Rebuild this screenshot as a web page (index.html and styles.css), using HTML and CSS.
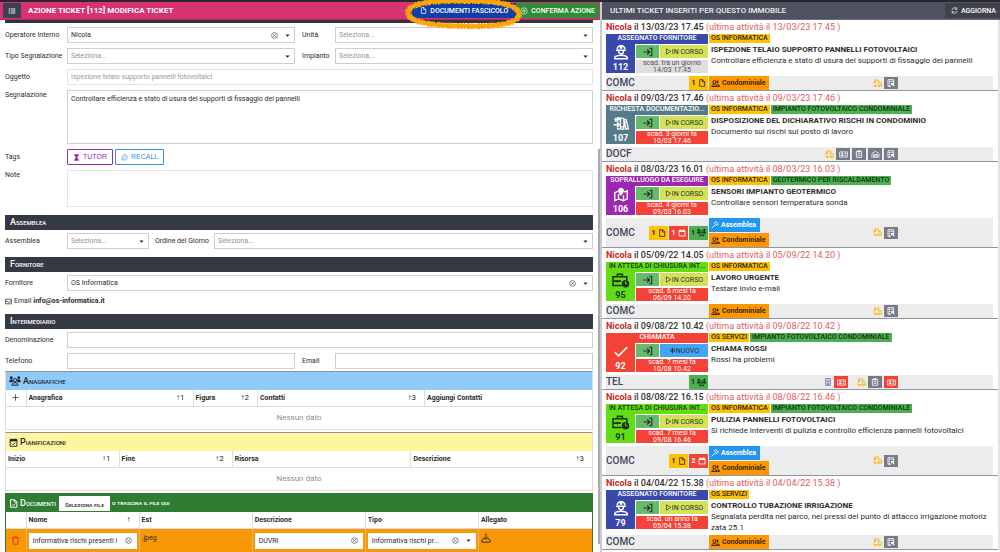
FILE: index.html
```html
<!DOCTYPE html>
<html lang="it">
<head>
<meta charset="utf-8">
<title>Azione ticket</title>
<link rel="stylesheet" href="styles.css">
</head>
<body>
<svg class="sprite" aria-hidden="true">
  <symbol id="list" viewBox="0 0 24 24"><path d="M2 4h4v4H2zM2 10h4v4H2zM2 16h4v4H2zM8 4h14v4H8zM8 10h14v4H8zM8 16h14v4H8z" fill="currentColor"/></symbol>
  <symbol id="file" viewBox="0 0 24 24"><path d="M5 2h9l6 6v14H5zM13 2v7h7" fill="none" stroke="currentColor" stroke-width="2.4"/></symbol>
  <symbol id="confirm" viewBox="0 0 24 24"><circle cx="12" cy="12" r="9.5" fill="none" stroke="currentColor" stroke-width="2"/><path d="M6 12h9M11 7l5 5-5 5" fill="none" stroke="currentColor" stroke-width="2.4"/></symbol>
  <symbol id="sync" viewBox="0 0 24 24"><path d="M3 11a9 9 0 0 1 16-5M21 13a9 9 0 0 1-16 5M20 1v7h-7M4 23v-7h7" fill="none" stroke="currentColor" stroke-width="2.4"/></symbol>
  <symbol id="clear" viewBox="0 0 24 24"><circle cx="12" cy="12" r="10" fill="none" stroke="currentColor" stroke-width="3"/><path d="M7.500 7.500l9 9M16.500 7.500l-9 9" stroke="currentColor" stroke-width="3"/></symbol>
  <symbol id="caret" viewBox="0 0 24 24"><path d="M2 7h20L12 18z" fill="currentColor"/></symbol>
  <symbol id="hourglass" viewBox="0 0 24 24"><path d="M4 1h16v4H4zM4 19h16v4H4zM6 5h12c0 4-3 5-4 7 1 2 4 3 4 7H6c0-4 3-5 4-7-1-2-4-3-4-7z" fill="currentColor"/></symbol>
  <symbol id="recall" viewBox="0 0 24 24"><path d="M3 21l1.500-5A9 9 0 1 1 9 20z" fill="none" stroke="currentColor" stroke-width="2.400"/><path d="M8 12l3 3 6-6" fill="none" stroke="currentColor" stroke-width="2.400"/></symbol>
  <symbol id="mail" viewBox="0 0 24 24"><path d="M2 4h20v16H2zM2 8l10 7 10-7" fill="none" stroke="currentColor" stroke-width="2.500"/></symbol>
  <symbol id="crowd" viewBox="0 0 28 24"><g fill="currentColor"><circle cx="5" cy="4" r="3.500"/><circle cx="23" cy="4" r="3.500"/><path d="M0 14c0-8 10-8 10-1l-3 2H0zM28 14c0-8-10-8-10-1l3 2h7z"/></g><circle cx="14" cy="9.500" r="3.800" fill="none" stroke="currentColor" stroke-width="2.200"/><path d="M6.500 22c0-8 15-8 15 0z" fill="none" stroke="currentColor" stroke-width="2.400"/></symbol>
  <symbol id="users" viewBox="0 0 24 24"><g fill="none" stroke="currentColor" stroke-width="2.600"><circle cx="9" cy="8" r="4"/><path d="M2 20v-2c1-4 13-4 14 0v2z"/></g><path d="M15 3c7 0 7 9 0 9zM17 14c4 0 6 2 6 4v3h-5z" fill="currentColor"/></symbol>
  <symbol id="calcheck" viewBox="0 0 24 24"><path d="M3 4h18v18H3zM8 1v4M16 1v4" fill="none" stroke="currentColor" stroke-width="2.500"/><path d="M3 4h18v5H3z" fill="currentColor"/><path d="M8 15l3 3 6-6" fill="none" stroke="currentColor" stroke-width="2.500"/></symbol>
  <symbol id="doccheck" viewBox="0 0 24 24"><path d="M4 2h11l6 6v14H4zM14 2v6h6M8 15l3 3 6-6" fill="none" stroke="currentColor" stroke-width="2.600"/></symbol>
  <symbol id="calendar" viewBox="0 0 24 24"><path d="M3 5h18v16H3zM7 1v4M17 1v4" fill="none" stroke="currentColor" stroke-width="2.600"/><path d="M3 4h18v5H3z" fill="currentColor"/></symbol>
  <symbol id="trash" viewBox="0 0 24 24"><path d="M2 5h20M8 5V2h8v3M5 5l1 17h12l1-17" fill="none" stroke="currentColor" stroke-width="2.600"/></symbol>
  <symbol id="download" viewBox="0 0 24 24"><path d="M12 1v14M7 10l5 5 5-5M8 13l-6 4v5h20v-5l-6-4" fill="none" stroke="currentColor" stroke-width="2.200"/></symbol>
  <symbol id="worker" viewBox="0 0 24 24"><path d="M6 7c0-8 12-8 12 0" fill="none" stroke="currentColor" stroke-width="2.400"/><path d="M10 1h4v5h-4zM4 7h16v2.500H4z" fill="currentColor"/><path d="M8 9c0 7 8 7 8 0M2 22v-2c2-5 18-5 20 0v2z" fill="none" stroke="currentColor" stroke-width="2.400"/></symbol>
  <symbol id="archive" viewBox="0 0 28 24"><path d="M8 9V2h5v20H8v-3M8 5h5M14 3h5v19h-5M19 6l4-1 4 16-4 1zM14 18h5M20 10l4-1" fill="none" stroke="currentColor" stroke-width="2.200"/><path d="M1 14h9M7 10l4 4-4 4M5 2v7M2 5h6" fill="none" stroke="currentColor" stroke-width="2.600"/></symbol>
  <symbol id="map" viewBox="0 0 24 24"><path d="M7 7L2 9v13l6-3 8 3 6-3V6l-5 2M8 11v8M16 13v9" fill="none" stroke="currentColor" stroke-width="2.200"/><path d="M12 14C4 6 8 1 12 1s8 5 0 13z" fill="currentColor"/></symbol>
  <symbol id="briefcase" viewBox="0 0 28 24"><path d="M16 20H2V6h22v5M9 6V2h8v4M2 13h13M9 11v4" fill="none" stroke="currentColor" stroke-width="2.500"/><circle cx="22" cy="17" r="6" fill="currentColor"/><path d="M22 13v4h3" fill="none" stroke="#62dd13" stroke-width="1.500"/></symbol>
  <symbol id="check" viewBox="0 0 24 24"><path d="M2 13l6 6L22 5" fill="none" stroke="currentColor" stroke-width="2.400"/></symbol>
  <symbol id="enter" viewBox="0 0 24 24"><path d="M1 12h14M10 6l6 6-6 6M15 3h6v18h-6" fill="none" stroke="currentColor" stroke-width="2.600"/></symbol>
  <symbol id="play" viewBox="0 0 24 24"><path d="M5 3l15 9-15 9z" fill="none" stroke="currentColor" stroke-width="2.400"/></symbol>
  <symbol id="star" viewBox="0 0 24 24"><path d="M12 2v20M3 7l18 10M21 7L3 17" stroke="currentColor" stroke-width="3"/></symbol>
  <symbol id="truck" viewBox="0 0 24 24"><path d="M3 3h12v15H3v-4M15 9h4l4 4v5h-8M2 7h7M1 10h7" fill="none" stroke="currentColor" stroke-width="2.800"/><circle cx="7" cy="19" r="3" fill="currentColor"/><circle cx="18" cy="19" r="3" fill="currentColor"/></symbol>
  <symbol id="estate" viewBox="0 0 24 24"><path d="M3 22V2h17v10M3 22h9" fill="none" stroke="currentColor" stroke-width="2.500"/><path d="M6 5h3v4H6zM11 5h3v4h-3zM16 5h3v4h-3zM6 11h3v4H6zM6 17h3v4H6zM12 12l11 0-3 4 3 6h-4l-3-5-3 3z" fill="currentColor"/></symbol>
  <symbol id="card" viewBox="0 0 28 24"><path d="M2 4h24v16H2zM17 9h6M17 14h6" fill="none" stroke="currentColor" stroke-width="2.500"/><circle cx="10" cy="9" r="3" fill="currentColor"/><path d="M5 17c0-6 10-6 10 0z" fill="currentColor"/></symbol>
  <symbol id="clip" viewBox="0 0 24 24"><path d="M4 4h16v18H4zM8 11h8M8 16h8" fill="none" stroke="currentColor" stroke-width="2.500"/><path d="M8 1h8v6H8z" fill="currentColor"/></symbol>
  <symbol id="garage" viewBox="0 0 28 24"><path d="M3 22V9l11-7 11 7v13M8 22V12h12v10M11 16h6v5h-6z" fill="none" stroke="currentColor" stroke-width="2.500"/></symbol>
  <symbol id="tower" viewBox="0 0 24 24"><path d="M5 1h14v21H5zM10 22v-6h4v6" fill="none" stroke="currentColor" stroke-width="2.500"/><path d="M8 5h3v3H8zM13 5h3v3h-3zM8 10h8v3H8z" fill="currentColor"/></symbol>
  <symbol id="gavel" viewBox="0 0 24 24"><path d="M10 6l5-4 7 7-4 5zM13 11L2 22" fill="none" stroke="currentColor" stroke-width="2.800"/></symbol>
  <symbol id="plus" viewBox="0 0 24 24"><path d="M12 1v22M1 12h22" stroke="currentColor" stroke-width="2.500"/></symbol>
</svg>

<div class="app">
  <section class="panel form-panel">
    <header class="bar bar-action">
      <button class="menu-btn" type="button" aria-label="Menu"><svg class="ic ic-8"><use href="#list"/></svg></button>
      <h1 class="bar-title">AZIONE TICKET [112] MODIFICA TICKET</h1>
      <span class="docs-wrap">
        <button class="bar-btn btn-docs" type="button"><svg class="ic ic-7"><use href="#file"/></svg>DOCUMENTI FASCICOLO</button>
        <svg class="marker" viewBox="0 0 120 32" preserveAspectRatio="none" aria-hidden="true">
          <path d="M60 3C100 2 116 9 115 17C114 26 92 29 60 28C24 28 3 23 4 14C5 6 26 2 60 3Z" fill="none" stroke="#fca50c" stroke-width="4"/>
          <path d="M60 3C100 2 116 9 115 17C114 26 92 29 60 28C24 28 3 23 4 14C5 6 26 2 60 3Z" fill="none" stroke="#fca50c" stroke-width="6" stroke-dasharray="2 1 3 2 1 1"/>
        </svg>
      </span>
      <button class="bar-btn btn-confirm" type="button"><svg class="ic ic-8"><use href="#confirm"/></svg>CONFERMA AZIONE</button>
    </header>

    <form class="form">
      <div class="section-edge"></div>
      <div class="fields">
        <label for="operatore">Operatore Interno</label>
        <div class="combo"><select id="operatore"><option>Nicola</option></select><button class="clear" type="button" aria-label="Cancella"><svg class="ic ic-7"><use href="#clear"/></svg></button><svg class="ic caret"><use href="#caret"/></svg></div>
        <label class="second" for="unita">Unità</label>
        <div class="combo empty"><select id="unita"><option>Seleziona...</option></select><svg class="ic caret"><use href="#caret"/></svg></div>

        <label for="tipo">Tipo Segnalazione</label>
        <div class="combo empty"><select id="tipo"><option>Seleziona...</option></select><svg class="ic caret"><use href="#caret"/></svg></div>
        <label class="second" for="impianto">Impianto</label>
        <div class="combo empty"><select id="impianto"><option>Seleziona...</option></select><svg class="ic caret"><use href="#caret"/></svg></div>

        <label for="oggetto">Oggetto</label>
        <input class="box wide" id="oggetto" type="text" value="Ispezione telaio supporto pannelli fotovoltaici" disabled>

        <label class="top" for="segnalazione">Segnalazione</label>
        <textarea class="box wide message" id="segnalazione">Controllare efficienza e stato di usura dei supporti di fissaggio dei pannelli</textarea>

        <span class="label">Tags</span>
        <div class="wide tags">
          <button class="tag tutor" type="button"><svg class="ic ic-7"><use href="#hourglass"/></svg>TUTOR</button>
          <button class="tag recall" type="button"><svg class="ic ic-7"><use href="#recall"/></svg>RECALL</button>
        </div>

        <label class="top" for="note">Note</label>
        <textarea class="box wide note" id="note"></textarea>
      </div>

      <h2 class="section caps">Assemblea</h2>
      <div class="fields agenda">
        <label for="assemblea">Assemblea</label>
        <div class="combo empty"><select id="assemblea"><option>Seleziona...</option></select><svg class="ic caret"><use href="#caret"/></svg></div>
        <label class="second" for="ordine">Ordine del Giorno</label>
        <div class="combo empty"><select id="ordine"><option>Seleziona...</option></select><svg class="ic caret"><use href="#caret"/></svg></div>
      </div>

      <h2 class="section caps">Fornitore</h2>
      <div class="fields">
        <label for="fornitore">Fornitore</label>
        <div class="combo wide"><select id="fornitore"><option>OS Informatica</option></select><button class="clear" type="button" aria-label="Cancella"><svg class="ic ic-7"><use href="#clear"/></svg></button><svg class="ic caret"><use href="#caret"/></svg></div>
      </div>
      <p class="email"><svg class="ic ic-7"><use href="#mail"/></svg> Email <b>info@os-informatica.it</b></p>

      <h2 class="section caps">Intermediario</h2>
      <div class="fields">
        <label for="denominazione">Denominazione</label>
        <input class="box wide" id="denominazione" type="text">
        <label for="telefono">Telefono</label>
        <input class="box" id="telefono" type="text">
        <label class="second" for="email">Email</label>
        <input class="box" id="email" type="text">
      </div>

      <div class="grid-card people">
        <h2 class="grid-title"><svg class="ic ic-crowd"><use href="#crowd"/></svg><span class="caps">Anagrafiche</span></h2>
        <table>
          <colgroup><col class="c-icon"><col class="c-28"><col class="c-11"><col class="c-28"><col></colgroup>
          <thead><tr><th><button class="add" type="button" aria-label="Aggiungi"><svg class="ic ic-7"><use href="#plus"/></svg></button></th><th><div class="th">Anagrafica<span>↑1</span></div></th><th><div class="th">Figura<span>↑2</span></div></th><th><div class="th">Contatti<span>↑3</span></div></th><th>Aggiungi Contatti</th></tr></thead>
          <tbody><tr><td class="none" colspan="5">Nessun dato</td></tr></tbody>
        </table>
      </div>

      <div class="grid-card plans">
        <h2 class="grid-title"><svg class="ic ic-9"><use href="#calcheck"/></svg><span class="caps">Pianificazioni</span></h2>
        <table>
          <colgroup><col class="c-19"><col class="c-19"><col class="c-31"><col></colgroup>
          <thead><tr><th><div class="th">Inizio<span>↑1</span></div></th><th><div class="th">Fine<span>↑2</span></div></th><th>Risorsa</th><th><div class="th">Descrizione<span>↑3</span></div></th></tr></thead>
          <tbody><tr><td class="none" colspan="4">Nessun dato</td></tr></tbody>
        </table>
      </div>

      <div class="grid-card docs">
        <h2 class="grid-title"><svg class="ic ic-9"><use href="#doccheck"/></svg><span class="caps">Documenti</span><button class="pick" type="button">Seleziona file</button><small>o trascina il file qui</small></h2>
        <table>
          <colgroup><col class="c-icon"><col class="c-19"><col class="c-19"><col class="c-19"><col class="c-19"><col></colgroup>
          <thead><tr><th></th><th><div class="th">Nome<span>↑</span></div></th><th>Est</th><th>Descrizione</th><th>Tipo</th><th>Allegato</th></tr></thead>
          <tbody><tr>
            <td class="mid"><button class="del" type="button" aria-label="Elimina"><svg class="ic ic-9"><use href="#trash"/></svg></button></td>
            <td class="edit"><div class="combo"><input type="text" aria-label="Nome" value="Informativa rischi presenti i"><button class="clear" type="button" aria-label="Cancella"><svg class="ic ic-7"><use href="#clear"/></svg></button></div></td>
            <td>.jpeg</td>
            <td class="edit"><div class="combo"><input type="text" aria-label="Descrizione" value="DUVRI"><button class="clear" type="button" aria-label="Cancella"><svg class="ic ic-7"><use href="#clear"/></svg></button></div></td>
            <td class="edit"><div class="combo"><select aria-label="Tipo"><option>Informativa rischi pr...</option></select><button class="clear" type="button" aria-label="Cancella"><svg class="ic ic-7"><use href="#clear"/></svg></button><svg class="ic caret"><use href="#caret"/></svg></div></td>
            <td><button class="get" type="button" aria-label="Scarica"><svg class="ic ic-10"><use href="#download"/></svg></button></td>
          </tr></tbody>
        </table>
      </div>
    </form>
    <div class="thumb"></div>
  </section>

  <section class="panel list-panel">
    <header class="bar bar-list">
      <h1 class="bar-title">ULTIMI TICKET INSERITI PER QUESTO IMMOBILE</h1>
      <button class="bar-btn btn-refresh" type="button"><svg class="ic ic-7"><use href="#sync"/></svg>AGGIORNA</button>
    </header>
    <div class="tickets">

      <article class="ticket">
        <p class="when"><b><i>Nicola</i> il 13/03/23 17.45</b> (ultima attività il 13/03/23 17.45 )</p>
        <div class="status indigo"><h3>ASSEGNATO FORNITORE</h3><div class="num"><svg class="ic ic-16"><use href="#worker"/></svg>112</div><button class="enter" type="button" aria-label="Apri"><svg class="ic ic-10"><use href="#enter"/></svg></button><span class="state"><svg class="ic ic-7"><use href="#play"/></svg>IN CORSO</span><p class="due grey">scad. tra un giorno<br>14/03 17.45</p></div>
        <div class="info"><div class="badges"><span class="amber">OS INFORMATICA</span></div><h4>ISPEZIONE TELAIO SUPPORTO PANNELLI FOTOVOLTAICI</h4><p>Controllare efficienza e stato di usura dei supporti di fissaggio dei pannelli</p></div>
        <footer class="foot"><div class="code"><strong>COMC</strong><span class="count amber">1<svg class="ic ic-8"><use href="#file"/></svg></span></div><div class="labels"><span class="cond"><svg class="ic ic-9"><use href="#users"/></svg>Condominiale</span></div><div class="marks"><svg class="ic ic-9 truck"><use href="#truck"/></svg><span class="mark"><svg class="ic ic-8"><use href="#estate"/></svg></span></div></footer>
      </article>

      <article class="ticket">
        <p class="when"><b><i>Nicola</i> il 09/03/23 17.46</b> (ultima attività il 09/03/23 17.46 )</p>
        <div class="status teal"><h3>RICHIESTA DOCUMENTAZIO...</h3><div class="num"><svg class="ic ic-16"><use href="#archive"/></svg>107</div><button class="enter" type="button" aria-label="Apri"><svg class="ic ic-10"><use href="#enter"/></svg></button><span class="state"><svg class="ic ic-7"><use href="#play"/></svg>IN CORSO</span><p class="due">scad. 3 giorni fa<br>10/03 17.46</p></div>
        <div class="info"><div class="badges"><span class="amber">OS INFORMATICA</span><span class="green">IMPIANTO FOTOVOLTAICO CONDOMINIALE</span></div><h4>DISPOSIZIONE DEL DICHIARATIVO RISCHI IN CONDOMINIO</h4><p>Documento sui rischi sul posto di lavoro</p></div>
        <footer class="foot"><div class="code"><strong>DOCF</strong></div><div class="labels"></div><div class="marks"><svg class="ic ic-9 truck"><use href="#truck"/></svg><span class="mark"><svg class="ic ic-9"><use href="#card"/></svg></span><span class="mark"><svg class="ic ic-8"><use href="#clip"/></svg></span><span class="mark"><svg class="ic ic-9"><use href="#garage"/></svg></span><span class="mark"><svg class="ic ic-8"><use href="#estate"/></svg></span></div></footer>
      </article>

      <article class="ticket">
        <p class="when"><b><i>Nicola</i> il 08/03/23 16.01</b> (ultima attività il 08/03/23 16.03 )</p>
        <div class="status purple"><h3>SOPRALLUOGO DA ESEGUIRE</h3><div class="num"><svg class="ic ic-16"><use href="#map"/></svg>106</div><button class="enter" type="button" aria-label="Apri"><svg class="ic ic-10"><use href="#enter"/></svg></button><span class="state"><svg class="ic ic-7"><use href="#play"/></svg>IN CORSO</span><p class="due">scad. 4 giorni fa<br>09/03 16.03</p></div>
        <div class="info"><div class="badges"><span class="amber">OS INFORMATICA</span><span class="green">GEOTERMICO PER RISCALDAMENTO</span></div><h4>SENSORI IMPIANTO GEOTERMICO</h4><p>Controllare sensori temperatura sonda</p></div>
        <footer class="foot"><div class="code"><strong>COMC</strong><span class="count amber">1<svg class="ic ic-8"><use href="#file"/></svg></span><span class="count red">1<svg class="ic ic-8"><use href="#calendar"/></svg></span><span class="count green">1<svg class="ic ic-9"><use href="#crowd"/></svg></span></div><div class="labels"><span class="asm"><svg class="ic ic-8"><use href="#gavel"/></svg>Assemblea</span><span class="cond"><svg class="ic ic-9"><use href="#users"/></svg>Condominiale</span></div><div class="marks"><svg class="ic ic-9 truck"><use href="#truck"/></svg><span class="mark"><svg class="ic ic-8"><use href="#estate"/></svg></span></div></footer>
      </article>

      <article class="ticket">
        <p class="when"><b><i>Nicola</i> il 05/09/22 14.05</b> (ultima attività il 05/09/22 14.20 )</p>
        <div class="status lime"><h3>IN ATTESA DI CHIUSURA INT...</h3><div class="num"><svg class="ic ic-18"><use href="#briefcase"/></svg>95</div><button class="enter" type="button" aria-label="Apri"><svg class="ic ic-10"><use href="#enter"/></svg></button><span class="state"><svg class="ic ic-7"><use href="#play"/></svg>IN CORSO</span><p class="due">scad. 6 mesi fa<br>06/09 14.20</p></div>
        <div class="info"><div class="badges"><span class="amber">OS INFORMATICA</span></div><h4>LAVORO URGENTE</h4><p>Testare invio e-mail</p></div>
        <footer class="foot"><div class="code"><strong>COMC</strong></div><div class="labels"><span class="cond"><svg class="ic ic-9"><use href="#users"/></svg>Condominiale</span></div><div class="marks"><svg class="ic ic-9 truck"><use href="#truck"/></svg><span class="mark"><svg class="ic ic-8"><use href="#estate"/></svg></span></div></footer>
      </article>

      <article class="ticket">
        <p class="when"><b><i>Nicola</i> il 09/08/22 10.42</b> (ultima attività il 09/08/22 10.42 )</p>
        <div class="status scarlet"><h3>CHIAMATA</h3><div class="num"><svg class="ic ic-16"><use href="#check"/></svg>92</div><button class="enter" type="button" aria-label="Apri"><svg class="ic ic-10"><use href="#enter"/></svg></button><span class="state new"><svg class="ic ic-7"><use href="#star"/></svg>NUOVO</span><p class="due">scad. 7 mesi fa<br>10/08 10.42</p></div>
        <div class="info"><div class="badges"><span class="amber">OS SERVIZI</span><span class="green">IMPIANTO FOTOVOLTAICO CONDOMINIALE</span></div><h4>CHIAMA ROSSI</h4><p>Rossi ha problemi</p></div>
        <footer class="foot"><div class="code"><strong>TEL</strong><span class="count green">1<svg class="ic ic-9"><use href="#crowd"/></svg></span></div><div class="labels"></div><div class="marks"><svg class="ic ic-8 tower"><use href="#tower"/></svg><span class="mark hot apart"><svg class="ic ic-9"><use href="#card"/></svg></span><svg class="ic ic-9 truck"><use href="#truck"/></svg><span class="mark"><svg class="ic ic-8"><use href="#clip"/></svg></span><span class="mark hot"><svg class="ic ic-9"><use href="#card"/></svg></span></div></footer>
      </article>

      <article class="ticket">
        <p class="when"><b><i>Nicola</i> il 08/08/22 16.15</b> (ultima attività il 08/08/22 16.46 )</p>
        <div class="status lime"><h3>IN ATTESA DI CHIUSURA INT...</h3><div class="num"><svg class="ic ic-18"><use href="#briefcase"/></svg>91</div><button class="enter" type="button" aria-label="Apri"><svg class="ic ic-10"><use href="#enter"/></svg></button><span class="state"><svg class="ic ic-7"><use href="#play"/></svg>IN CORSO</span><p class="due">scad. 7 mesi fa<br>09/08 16.46</p></div>
        <div class="info"><div class="badges"><span class="amber">OS INFORMATICA</span><span class="green">IMPIANTO FOTOVOLTAICO CONDOMINIALE</span></div><h4>PULIZIA PANNELLI FOTOVOLTAICI</h4><p>Si richiede interventi di pulizia e controllo efficienza pannelli fotovoltaici</p></div>
        <footer class="foot"><div class="code"><strong>COMC</strong><span class="count amber">1<svg class="ic ic-8"><use href="#file"/></svg></span><span class="count red">2<svg class="ic ic-8"><use href="#calendar"/></svg></span></div><div class="labels"><span class="asm"><svg class="ic ic-8"><use href="#gavel"/></svg>Assemblea</span><span class="cond"><svg class="ic ic-9"><use href="#users"/></svg>Condominiale</span></div><div class="marks"><svg class="ic ic-9 truck"><use href="#truck"/></svg><span class="mark"><svg class="ic ic-8"><use href="#estate"/></svg></span></div></footer>
      </article>

      <article class="ticket">
        <p class="when"><b><i>Nicola</i> il 04/04/22 15.38</b> (ultima attività il 04/04/22 15.38 )</p>
        <div class="status indigo"><h3>ASSEGNATO FORNITORE</h3><div class="num"><svg class="ic ic-16"><use href="#worker"/></svg>79</div><button class="enter" type="button" aria-label="Apri"><svg class="ic ic-10"><use href="#enter"/></svg></button><span class="state"><svg class="ic ic-7"><use href="#play"/></svg>IN CORSO</span><p class="due">scad. un anno fa<br>05/04 15.38</p></div>
        <div class="info"><div class="badges"><span class="amber">OS SERVIZI</span></div><h4>CONTROLLO TUBAZIONE IRRIGAZIONE</h4><p>Segnalata perdita nel parco, nei pressi del punto di attacco irrigazione motorizzata 25.1</p></div>
        <footer class="foot"><div class="code"><strong>COMC</strong></div><div class="labels"><span class="cond"><svg class="ic ic-9"><use href="#users"/></svg>Condominiale</span></div><div class="marks"><svg class="ic ic-9 truck"><use href="#truck"/></svg><span class="mark"><svg class="ic ic-8"><use href="#estate"/></svg></span></div></footer>
      </article>
    </div>
  </section>
</div>
</body>
</html>
```
FILE: styles.css
```css
* { box-sizing: border-box; }
body { margin: 0; background: #fff; color: #2b2b2b; font: 7px/10px Roboto, "Liberation Sans", sans-serif; overflow: hidden; }
h1, h2, h3, h4, p { margin: 0; font-size: inherit; }
button, input, select, textarea { font: inherit; color: inherit; margin: 0; padding: 0; border: 0; background: none; border-radius: 0; }
button { cursor: pointer; }
.sprite { display: none; }
.ic { display: block; flex: none; width: 8px; height: 8px; }
.ic-7 { width: 7px; height: 7px; }
.ic-9 { width: 9px; height: 9px; }
.ic-10 { width: 10px; height: 10px; }
.ic-16 { width: 16px; height: 15px; }
.ic-18 { width: 19px; height: 15px; }
.ic-crowd { width: 12px; height: 10px; }

.app { display: grid; grid-template-columns: minmax(0, 3fr) minmax(0, 2fr); height: 100vh; border-top: 2px solid #2d2631; }
.panel { position: relative; min-width: 0; overflow: hidden; }
.list-panel { border-left: 2px solid #c9cad2; }

/* Top bars */
.bar { display: flex; align-items: center; height: 18px; color: #fff; }
.bar-action { background: #d6336f; border-bottom: 1px solid #a82a5b; padding-right: 1px; }
.bar-list { background: #4d5160; border-bottom: 1px solid #6b6e7a; padding-left: 8px; }
.bar-title { flex: 1; font-size: 8px; font-weight: 700; white-space: nowrap; }
.bar-list .bar-title { font-weight: 500; color: #eee; }
.menu-btn { display: grid; place-items: center; width: 18px; height: 15px; margin: 0 7px 0 3px; background: #3b4252; color: #aeb3bd; border-radius: 1px; }
.bar-btn { display: flex; align-items: center; gap: 3px; height: 15px; font-weight: 500; color: #fff; white-space: nowrap; }
.docs-wrap { position: relative; }
.btn-docs { background: #0f3fa6; padding: 0 8px; }
.marker { position: absolute; left: -8px; top: -5px; width: calc(100% + 16px); height: 32px; z-index: 2; pointer-events: none; }
.btn-confirm { background: #2e8b36; padding: 0 4px; }
.btn-refresh { background: #3f424b; padding: 0 4px 0 6px; }
.form-panel { overflow: visible; }

/* Form */
.form { padding: 0 7px 0 5px; }
.section-edge { height: 3px; background: #31343d; margin-bottom: 4px; }
.fields { display: grid; grid-template-columns: 62px minmax(0, 228fr) 40px minmax(0, 258fr); row-gap: 5px; align-items: center; }
.fields .wide { grid-column: 2 / -1; }
.fields .top { align-self: start; }
.fields label { white-space: nowrap; }
.fields .second { padding-left: 7px; }
.agenda { grid-template-columns: 62px minmax(0, 82fr) 65px minmax(0, 379fr); }
.agenda .second { padding-left: 6px; }
.box, .combo { width: 100%; height: 16px; border: 1px solid #cfcfcf; background: #fff; }
.box { padding: 0 3px; }
textarea.box { display: block; resize: none; overflow: hidden; padding: 3px; }
.box.message { height: 54px; }
.box.note { height: 37px; border-color: #e4e4e4; }
.box:disabled { border-color: #e4e4e4; color: #999; }
.combo { display: flex; align-items: center; position: relative; padding-right: 4px; }
.combo select, .combo input { flex: 1; min-width: 0; height: 100%; padding: 0 3px; appearance: none; text-overflow: ellipsis; }
.combo.empty select { color: #969696; }
.combo .clear { color: #777; margin-right: 7px; }
.combo .caret { width: 5px; height: 5px; color: #222; }
.combo input + .clear { margin-right: 0; }
.tags { display: flex; gap: 2px; }
.tag { display: flex; align-items: center; gap: 3px; height: 16px; padding: 0 5px; border: 1px solid; border-radius: 1px; font: 7px/10px "Liberation Sans", Arial, sans-serif; }
.tutor { color: #9c27b0; }
.recall { color: #2e93ee; }
.caps { display: block; font-size: 6px; font-weight: 500; text-transform: uppercase; }
.caps::first-letter { font-size: 9px; }
.section { height: 15px; margin: 8px 0 3px; padding: 0 5px; background: #353942; color: #fff; line-height: 15px; }
.email { display: flex; align-items: center; gap: 2px; margin-top: 5px; line-height: 10px; }

/* Data grids */
.grid-card { border: 1px solid #ddd; border-top: 1px solid #8d9299; margin-top: 2px; }
.grid-title { display: flex; align-items: center; gap: 2px; height: 18px; padding: 0 3px; font-weight: 500; line-height: 18px; color: #1b2733; }
.people .grid-title { background: #90caf9; }
.plans .grid-title { background: #fff59d; }
.docs { border-color: #2e7d32; }
.docs .grid-title { background: #2e7d32; color: #fff; }
.pick { height: 15px; margin-left: 1px; padding: 0 6px; background: #fff; color: #333; font-size: 6px; font-variant: small-caps; }
.grid-title small { font-size: 6px; font-weight: 500; font-variant: small-caps; }
.grid-card table { width: 100%; table-layout: fixed; border-collapse: collapse; }
.c-icon { width: 20px; }
.c-11 { width: 11%; }
.c-19 { width: 19.3%; }
.c-28 { width: 28.5%; }
.c-31 { width: 30.5%; }
th { height: 16px; padding: 0 2px; text-align: left; font-weight: 700; border-bottom: 1px solid #ddd; }
th + th, .docs td + td { border-left: 1px solid #ddd; }
.th { display: flex; justify-content: space-between; }
.th span { font-size: 8px; font-weight: 400; padding-right: 6px; }
.add { display: block; margin: auto; }
.none { height: 23px; padding: 0; text-align: center; font-size: 8px; color: #909090; }
.docs td { height: 25px; padding: 4px 2px; background: #f99706; vertical-align: top; }
.docs td + td { border-color: #e8b565; }
.docs td.mid { vertical-align: middle; }
.docs .combo { border-color: #fff; }
.del { display: block; margin: auto; color: #e33b1c; }
.get { display: block; }

.thumb { position: absolute; right: 0; top: 147px; bottom: 10px; width: 2px; background: #aaa; }

/* Ticket list */
.tickets { border-right: 2px solid #e3e3e6; }
.ticket { display: grid; grid-template-columns: 102px minmax(0, 1fr); column-gap: 1px; padding: 0 5px 0 4px; border-bottom: 1px solid #8b979e; }
.when { grid-column: 1 / -1; height: 14px; font-size: 9px; line-height: 14px; color: #e35d5d; white-space: nowrap; }
.when b { color: #333; font-weight: 500; }
.when i { color: #c62828; font-style: normal; font-weight: 700; }
.status { display: grid; grid-template-columns: 29px 24px minmax(0, 1fr); grid-template-rows: 9px 14px 14px; row-gap: 1px; align-self: start; height: 40px; }
.status h3 { grid-column: 1 / -1; height: 10px; background: var(--tone); color: var(--ink, #fff); line-height: 9px; font-weight: 500; text-align: center; white-space: nowrap; }
.num { grid-row: 2 / 4; display: flex; flex-direction: column; align-items: center; justify-content: space-between; padding: 1px 0; background: var(--tone); color: var(--ink, #fff); font-size: 9px; font-weight: 700; }
.status .enter, .state, .due { margin: 1px 0 0 1px; }
.enter { display: grid; place-items: center; background: #66bb6a; }
.state { display: flex; align-items: center; justify-content: center; background: #d4e157; color: #263238; }
.state.new { background: #42a5f5; }
.due { grid-column: 2 / 4; background: #f44336; color: #fff; line-height: 7px; text-align: center; white-space: nowrap; }
.due.grey { background: #dedede; color: #555; }
.indigo { --tone: #3949ab; }
.teal { --tone: #557b8a; }
.purple { --tone: #9c27b0; }
.lime { --tone: #62dd13; --ink: #1c3315; }
.scarlet { --tone: #f44336; }
.badges { display: flex; gap: 1px; height: 9px; margin-bottom: 1px; }
.badges span { padding: 0 2px; line-height: 9px; font-weight: 500; white-space: nowrap; }
.amber { background: #ffc107; color: #2b2410; }
.green { background: #4caf50; color: #12300f; }
.red { background: #f44336; color: #fff; }
.info h4 { padding-left: 2px; font-size: 8px; line-height: 11px; font-weight: 700; }
.info p { padding: 0 4px 0 2px; font-size: 8px; line-height: 11px; word-break: break-all; }
.foot { grid-column: 1 / -1; display: grid; grid-template-columns: 102px minmax(0, 1fr) auto; column-gap: 1px; align-items: center; min-height: 14px; margin-top: 2px; padding-right: 95px; background: #ececec; }
.code { display: flex; gap: 1px; align-items: center; }
.code strong { flex: 1; font-size: 10px; font-weight: 500; color: #3f4458; }
.count { display: flex; align-items: center; justify-content: center; gap: 2px; width: 19px; height: 14px; font-weight: 700; }
.labels { display: flex; flex-direction: column; align-items: flex-start; gap: 1px; }
.labels span { display: flex; align-items: center; gap: 2px; height: 14px; padding: 0 4px 0 2px; font-weight: 700; }
.cond { background: #ff9800; color: #3a2505; }
.asm { background: #2196f3; color: #fff; }
.marks { display: flex; align-items: center; gap: 2px; }
.mark { display: grid; place-items: center; width: 14px; height: 12px; background: #777b88; color: #fff; }
.mark.hot { background: #f44336; }
.mark.apart { margin-right: 7px; }
.truck { color: #fbc02d; }
.tower { color: #5c6bc0; }
```
